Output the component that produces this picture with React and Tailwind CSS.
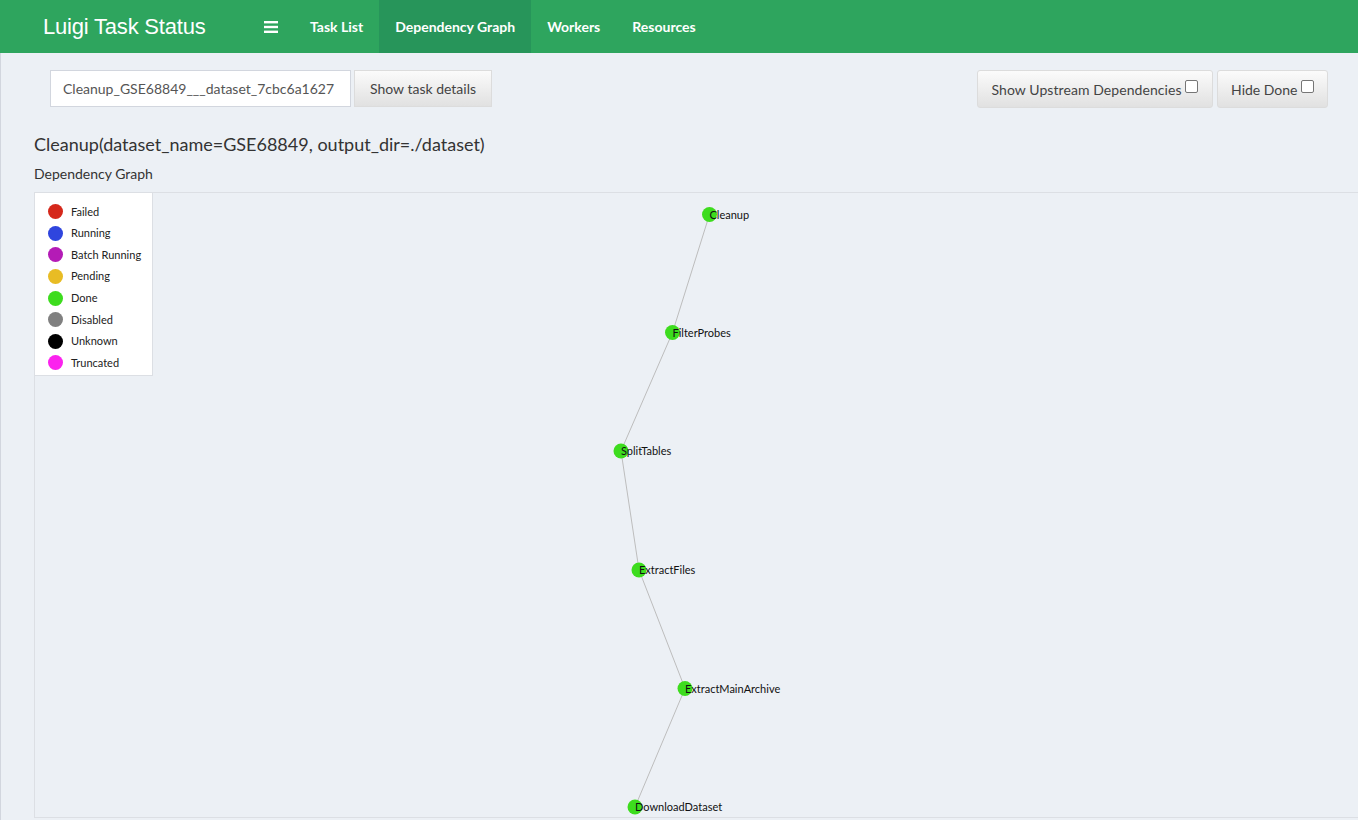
import React from "react";

const legend = [
  { label: "Failed", color: "#d5281b" },
  { label: "Running", color: "#2f45de" },
  { label: "Batch Running", color: "#b41bb6" },
  { label: "Pending", color: "#e8bc24" },
  { label: "Done", color: "#3ddc1e" },
  { label: "Disabled", color: "#808080" },
  { label: "Unknown", color: "#000000" },
  { label: "Truncated", color: "#fb22ee" },
];

// node centres, relative to the graph panel's inner box
const nodes = [
  { name: "Cleanup", x: 674.5, y: 21.5 },
  { name: "FilterProbes", x: 637.5, y: 139.5 },
  { name: "SplitTables", x: 586, y: 258 },
  { name: "ExtractFiles", x: 604, y: 377 },
  { name: "ExtractMainArchive", x: 650, y: 495.5 },
  { name: "DownloadDataset", x: 600, y: 614 },
];

const navItems = ["Task List", "Dependency Graph", "Workers", "Resources"];

function Checkbox() {
  return (
    <span className="inline-block w-[13px] h-[13px] rounded-[2px] border border-[#767676] bg-white ml-[3px] -translate-y-[3px]" />
  );
}

export default function App() {
  const font = { fontFamily: "Lato, 'Noto Sans', sans-serif" };
  return (
    <div className="w-[1358px] h-[820px] overflow-hidden bg-[#ecf0f5] text-[#333]" style={font}>
      {/* Top bar */}
      <header className="h-[53px] bg-[#2ea55e] flex items-stretch text-white">
        <div className="w-[250px] flex items-center pl-[43px]">
          <span
            className="text-[22px] tracking-[-0.2px]"
            style={{ fontFamily: "'Liberation Sans', Arial, sans-serif" }}
          >
            Luigi Task Status
          </span>
        </div>
        <div className="flex items-center pl-[14px] pr-[16px]">
          <svg width="14" height="12" viewBox="0 0 14 12">
            <rect x="0" y="0" width="14" height="2.4" fill="white" />
            <rect x="0" y="4.8" width="14" height="2.4" fill="white" />
            <rect x="0" y="9.6" width="14" height="2.4" fill="white" />
          </svg>
        </div>
        <nav className="flex items-stretch">
          {navItems.map((n) => (
            <div
              key={n}
              className={`flex items-center px-4 text-[14px] font-bold ${
                n === "Dependency Graph" ? "bg-[#27955a]" : ""
              }`}
            >
              {n}
            </div>
          ))}
        </nav>
      </header>

      {/* Content */}
      <main className="h-[767px] border-l border-[#d2d6de]">
        <div className="flex justify-between items-start pt-[17px] pl-[49px] pr-[30px]">
          <div className="flex gap-[3px]">
            <div className="w-[301px] h-[37px] bg-white border border-[#d2d6de] flex items-center px-[12px] text-[14px] text-[#555]">
              Cleanup_GSE68849___dataset_7cbc6a1627
            </div>
            <button className="h-[37px] px-[15px] border border-[#dcdcdc] bg-gradient-to-b from-[#fbfbfb] to-[#e1e1e1] text-[14px] text-[#444]">
              Show task details
            </button>
          </div>
          <div className="flex gap-[4px]">
            <button className="h-[38px] px-[14px] rounded-[3px] border border-[#dcdcdc] bg-gradient-to-b from-[#fbfbfb] to-[#e1e1e1] text-[14px] tracking-[0.07px] text-[#444] flex items-center">
              Show Upstream Dependencies
              <Checkbox />
            </button>
            <button className="h-[38px] px-[13.5px] rounded-[3px] border border-[#dcdcdc] bg-gradient-to-b from-[#fbfbfb] to-[#e1e1e1] text-[14px] text-[#444] flex items-center">
              Hide Done
              <Checkbox />
            </button>
          </div>
        </div>

        <div className="pl-[33px]">
          <h3 className="text-[18px] mt-[24px] leading-[24px]">
            Cleanup(dataset_name=GSE68849, output_dir=./dataset)
          </h3>
          <div className="text-[14px] mt-[8px] leading-[20px]">Dependency Graph</div>

          {/* Graph panel */}
          <div className="relative mt-[8px] w-[1400px] h-[626px] border border-[#dcdfe4]">
            <svg className="absolute inset-0" width="1400" height="626">
              {nodes.slice(1).map((n, i) => (
                <line
                  key={n.name}
                  x1={nodes[i].x}
                  y1={nodes[i].y}
                  x2={n.x}
                  y2={n.y}
                  stroke="#bdbdbd"
                  strokeWidth="1"
                />
              ))}
              {nodes.map((n) => (
                <g key={n.name}>
                  <circle cx={n.x} cy={n.y} r="7.5" fill="#3ddc1e" />
                  <text
                    x={n.x}
                    y={n.y + 4}
                    fontSize="11"
                    fill="#111"
                    style={{ fontFamily: "Lato, 'Noto Sans', sans-serif" }}
                  >
                    {n.name}
                  </text>
                </g>
              ))}
            </svg>

            {/* Legend */}
            <div className="absolute left-0 top-0 w-[118px] h-[183px] bg-white border-r border-b border-[#dcdfe4] pt-[8px] pl-[13px]">
              {legend.map((l) => (
                <div key={l.label} className="flex items-center h-[21.6px]">
                  <span
                    className="w-[15px] h-[15px] rounded-full"
                    style={{ backgroundColor: l.color }}
                  />
                  <span className="ml-[8px] text-[11px] text-[#222]">{l.label}</span>
                </div>
              ))}
            </div>
          </div>
        </div>
      </main>
    </div>
  );
}
